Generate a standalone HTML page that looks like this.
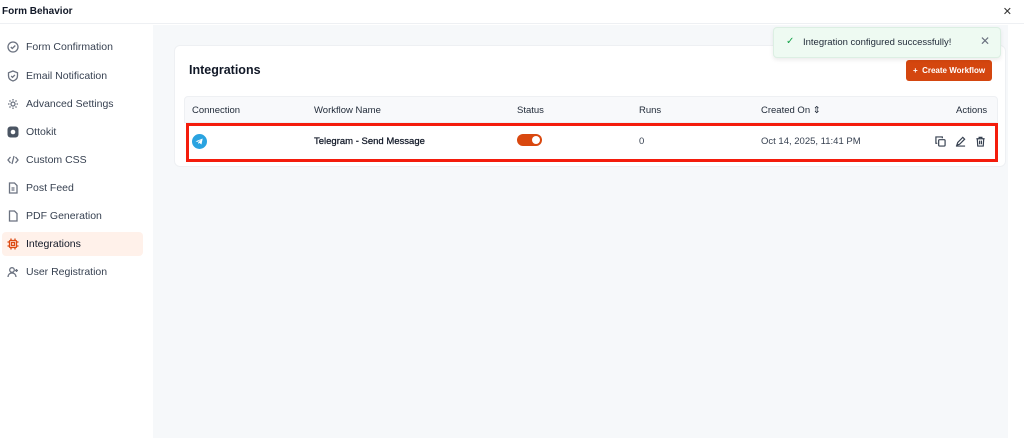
<!DOCTYPE html>
<html><head><style>
*{box-sizing:border-box;margin:0;padding:0}
body{width:1024px;height:438px;overflow:hidden;background:#fff;font-family:"Liberation Sans",sans-serif;color:#111827;position:relative}
.hdr{position:absolute;left:0;top:0;width:1024px;height:24px;border-bottom:1px solid #eef0f3}
.hdr .t{position:absolute;left:2px;top:6px;font-size:10px;font-weight:bold}
.hdr .x{position:absolute;right:12px;top:5px;font-size:11px;color:#333}
.side{position:absolute;left:0;top:25px;width:153px;height:413px}
.it{position:absolute;left:2px;width:141px;height:24px;border-radius:4px;font-size:10.5px;color:#374151;display:flex;align-items:center;padding-left:5px}
.it svg{width:12px;height:12px;margin-right:7px;fill:none;stroke:#6b7280;stroke-width:1.3}
.it.a{background:#fff1ea;color:#111827}
.it.a svg{stroke:#dc4a12}
.main{position:absolute;left:153px;top:25px;width:855px;height:413px;background:#f6f8fa}
.card{position:absolute;left:174px;top:45px;width:832px;height:122px;background:#fff;border-radius:6px;border:1px solid #eef0f3}
.h{position:absolute;left:189px;top:63px;font-size:12.5px;font-weight:bold}
.btn{position:absolute;left:906px;top:60px;width:86px;height:21px;background:#d4460f;border-radius:3px;color:#fff;font-size:8px;font-weight:bold;display:flex;align-items:center;justify-content:center}
.th{position:absolute;left:184px;top:96px;width:814px;height:27px;background:#f8f9fb;border-radius:4px 4px 0 0;border:1px solid #eef0f3}
.c{position:absolute;font-size:9.5px;color:#1f2937}
.red{position:absolute;left:186px;top:123px;width:812px;height:39px;border:3px solid #f41c0c}
.toast{position:absolute;left:773px;top:27px;width:228px;height:31px;background:#eefaf2;border:1px solid #dcefe3;border-radius:4px;box-shadow:0 2px 4px rgba(0,0,0,.08);font-size:9.5px;color:#1f2937}
.ic{position:absolute;width:11px;height:11px;fill:none;stroke:#374151;stroke-width:1.3}
</style></head><body>
<div class="hdr"><div class="t">Form Behavior</div><div class="x">✕</div></div>
<div class="side">
<div class="it" style="top:10px"><svg viewBox="0 0 12 12"><circle cx="6" cy="6" r="5"/><path d="M3.8 6l1.5 1.5 3-3"/></svg>Form Confirmation</div>
<div class="it" style="top:39px"><svg viewBox="0 0 12 12"><path d="M6 1l4.5 1.8v3C10.5 8.5 8.5 10.3 6 11 3.5 10.3 1.5 8.5 1.5 5.8v-3z"/><path d="M4.2 6l1.3 1.3 2.4-2.4"/></svg>Email Notification</div>
<div class="it" style="top:67px"><svg viewBox="0 0 12 12"><circle cx="6" cy="6" r="2"/><path d="M6 1v1.5M6 9.5V11M1 6h1.5M9.5 6H11M2.5 2.5l1 1M8.5 8.5l1 1M2.5 9.5l1-1M8.5 3.5l1-1"/></svg>Advanced Settings</div>
<div class="it" style="top:95px"><svg viewBox="0 0 12 12" style="stroke:none"><rect x="0.5" y="0.5" width="11" height="11" rx="3" fill="#4b5563"/><circle cx="6" cy="6" r="2.3" fill="#fff"/></svg>Ottokit</div>
<div class="it" style="top:123px"><svg viewBox="0 0 12 12"><path d="M3.5 3L1 6l2.5 3M8.5 3L11 6 8.5 9M7 2L5 10"/></svg>Custom CSS</div>
<div class="it" style="top:151px"><svg viewBox="0 0 12 12"><path d="M2.5 1h5l2.5 2.5V11h-7.5z M4.5 6h3M4.5 8h3"/></svg>Post Feed</div>
<div class="it" style="top:179px"><svg viewBox="0 0 12 12"><path d="M2.5 1h5l2.5 2.5V11h-7.5z"/></svg>PDF Generation</div>
<div class="it a" style="top:207px"><svg viewBox="0 0 12 12"><rect x="2.5" y="2.5" width="7" height="7" rx="1"/><rect x="4.5" y="4.5" width="3" height="3"/><path d="M4 .5v2M8 .5v2M4 9.5v2M8 9.5v2M.5 4h2M.5 8h2M9.5 4h2M9.5 8h2"/></svg>Integrations</div>
<div class="it" style="top:235px"><svg viewBox="0 0 12 12"><circle cx="5" cy="4" r="2.3"/><path d="M1 11c0-2.5 1.8-4 4-4s4 1.5 4 4M9.5 3v3M8 4.5h3"/></svg>User Registration</div>
</div>
<div class="main"></div>
<div class="card"></div>
<div class="h">Integrations</div>
<div class="btn">+&nbsp; Create Workflow</div>
<div class="th"></div>
<div class="c" style="left:192px;top:105px">Connection</div>
<div class="c" style="left:314px;top:105px">Workflow Name</div>
<div class="c" style="left:517px;top:105px">Status</div>
<div class="c" style="left:639px;top:105px">Runs</div>
<div class="c" style="left:761px;top:105px">Created On ⇕</div>
<div class="c" style="left:956px;top:105px">Actions</div>
<div class="red"></div>
<svg style="position:absolute;left:192px;top:134px" width="15" height="15" viewBox="0 0 16 16"><circle cx="8" cy="8" r="8" fill="#2aa3e0"/><path d="M3.8 7.8l7.6-3-1.3 6.4-2.3-1.7-1.2 1.1.1-1.8 3-2.7-3.8 2.3z" fill="#fff"/></svg>
<div class="c" style="left:314px;top:136px;color:#111827;-webkit-text-stroke:0.25px #111827">Telegram - Send Message</div>
<div style="position:absolute;left:517px;top:134px;width:25px;height:12px;border-radius:6px;background:#d9480f"><div style="position:absolute;right:2px;top:2px;width:8px;height:8px;border-radius:50%;background:#fff"></div></div>
<div class="c" style="left:639px;top:136px;color:#374151">0</div>
<div class="c" style="left:761px;top:136px;color:#374151">Oct 14, 2025, 11:41 PM</div>
<svg class="ic" style="left:935px;top:136px" viewBox="0 0 12 12"><rect x="4" y="4" width="7" height="7" rx="1"/><path d="M8 2.5V1H1v7h1.5"/></svg>
<svg class="ic" style="left:955px;top:136px" viewBox="0 0 12 12"><path d="M2 10l1-3 5.5-5.5 2 2L5 9z M1 11h10"/></svg>
<svg class="ic" style="left:975px;top:136px" viewBox="0 0 12 12"><path d="M1.5 3h9M4.5 3V1.5h3V3M2.5 3l.5 8h6l.5-8M5 5v4M7 5v4"/></svg>
<div class="toast"><span style="position:absolute;left:12px;top:8px;color:#16a34a;font-size:10px">✓</span><span style="position:absolute;left:29px;top:9px">Integration configured successfully!</span><span style="position:absolute;right:10px;top:6px;color:#6b7280;font-size:12px">✕</span></div>
</body></html>
